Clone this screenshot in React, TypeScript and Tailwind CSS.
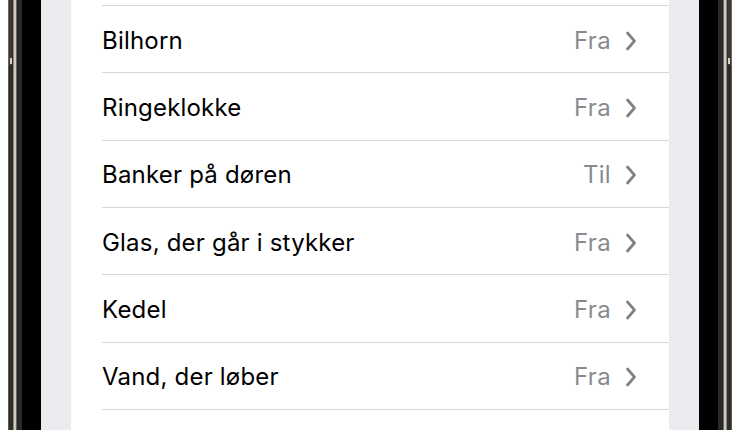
import React from "react";

const rows: { label: string; value: string }[] = [
  { label: "Bilhorn", value: "Fra" },
  { label: "Ringeklokke", value: "Fra" },
  { label: "Banker på døren", value: "Til" },
  { label: "Glas, der går i stykker", value: "Fra" },
  { label: "Kedel", value: "Fra" },
  { label: "Vand, der løber", value: "Fra" },
];

function Chevron() {
  return (
    <svg width="12" height="20" viewBox="0 0 12 20" fill="none">
      <path d="M2.5 2 L9.5 10 L2.5 18" stroke="#818185" strokeWidth="2.7" strokeLinecap="round" strokeLinejoin="round" />
    </svg>
  );
}

export default function App() {
  return (
    <div className="relative w-[740px] h-[430px] bg-white flex overflow-hidden" style={{ fontFamily: "Inter, 'Liberation Sans', sans-serif" }}>
      {/* left frame */}
      <div className="w-[8px] bg-white" />
      <div className="w-[1px] bg-[#5b5753]" />
      <div className="w-[4px] bg-[#2f2d2b]" />
      <div className="w-[1px] bg-[#8f8a83]" />
      <div className="w-[2px] bg-[#cfc9bf]" />
      <div className="w-[1px] bg-[#6a655f]" />
      <div className="w-[5px] bg-[#2a2a2a]" />
      <div className="w-[19px] bg-black" />
      {/* left inset */}
      <div className="w-[30px] bg-[#ebebf0]" />
      {/* content */}
      <div className="w-[598px] bg-white flex flex-col">
        <div className="h-[5px]" />
        {rows.map((r) => (
          <div key={r.label} className="flex flex-col">
            <div className="ml-[31px] h-[1px] bg-[#d8d8dc]" />
            <div className="h-[66.33px] ml-[31px] pr-[32px] pt-[3px] flex items-center justify-between">
              <span className="text-[24px] text-black tracking-[0.2px]">{r.label}</span>
              <span className="flex items-center gap-[14px]">
                <span className="text-[24px] text-[#8a8a8e] tracking-[0.3px]">{r.value}</span>
                <Chevron />
              </span>
            </div>
          </div>
        ))}
        <div className="ml-[31px] h-[1px] bg-[#d8d8dc]" />
      </div>
      {/* right inset */}
      <div className="w-[30px] bg-[#ebebf0]" />
      <div className="w-[19px] bg-black" />
      <div className="w-[5px] bg-[#2a2a2a]" />
      <div className="w-[1px] bg-[#6a655f]" />
      <div className="w-[2px] bg-[#cfc9bf]" />
      <div className="w-[1px] bg-[#8f8a83]" />
      <div className="w-[4px] bg-[#2f2d2b]" />
      <div className="w-[1px] bg-[#5b5753]" />
      <div className="w-[8px] bg-white" />
      {/* side buttons */}
      <div className="absolute left-[8px] top-0 w-[4px] h-[65px] bg-[#3a3835] border-l border-[#6b6660]">
        <div className="absolute left-[1px] bottom-[1px] w-[2px] h-[6px] bg-[#d8d2c8]" />
      </div>
      <div className="absolute right-[8px] top-0 w-[4px] h-[65px] bg-[#3a3835] border-r border-[#6b6660]">
        <div className="absolute right-[1px] bottom-[1px] w-[2px] h-[6px] bg-[#d8d2c8]" />
      </div>
    </div>
  );
}
